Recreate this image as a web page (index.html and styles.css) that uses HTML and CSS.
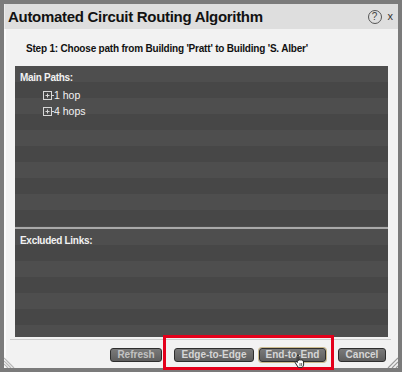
FILE: index.html
```html
<!DOCTYPE html>
<html lang="en">

<head>
    <meta charset="UTF-8">
    <meta name="viewport" content="width=device-width, initial-scale=1.0">
    <title>Automated Circuit Routing Algorithm</title>
    <link rel="stylesheet" href="styles.css">
</head>

<body>
    <div class="dialog">
        <!-- title bar -->
        <div class="titlebar">
            <span class="title">Automated Circuit Routing Algorithm</span>
            <span class="help">?</span>
            <span class="close">x</span>
        </div>

        <div class="content">
            <p class="step">Step 1: Choose path from Building 'Pratt' to Building 'S. Alber'</p>

            <div class="panel">
                <div class="section main">
                    <div class="heading">Main Paths:</div>
                    <ul class="tree">
                        <li>
                            <svg class="expander" width="11" height="9" viewBox="0 0 11 9">
                                <rect x="0.5" y="0.5" width="8" height="8" fill="none" stroke="#d8d8d8" />
                                <path d="M2.5 4.5h4M4.5 2.5v4M8.5 4.5h2.5" stroke="#d8d8d8" />
                            </svg>1 hop
                        </li>
                        <li>
                            <svg class="expander" width="11" height="9" viewBox="0 0 11 9">
                                <rect x="0.5" y="0.5" width="8" height="8" fill="none" stroke="#d8d8d8" />
                                <path d="M2.5 4.5h4M4.5 2.5v4M8.5 4.5h2.5" stroke="#d8d8d8" />
                            </svg>4 hops
                        </li>
                    </ul>
                </div>
                <div class="section excluded">
                    <div class="heading">Excluded Links:</div>
                </div>
            </div>

            <div class="rule"></div>

            <div class="buttons">
                <button class="btn refresh">Refresh</button>
                <button class="btn edge">Edge-to-Edge</button>
                <button class="btn end">End-to-End</button>
                <button class="btn cancel">Cancel</button>
            </div>
        </div>

        <!-- resize grips -->
        <svg class="grip grip-left" width="13" height="13" viewBox="0 0 13 13">
            <path d="M0 3l10 10M0 6l7 7M0 9l4 4" stroke="#b8b8b8" stroke-width="1.2" />
        </svg>
        <svg class="grip grip-right" width="11" height="11" viewBox="0 0 11 11">
            <path d="M11 1L1 11M11 5L5 11M11 9L9 11" stroke="#9a9a9a" stroke-width="1.2" />
        </svg>

        <!-- annotation + pointer -->
        <div class="highlight"></div>
        <svg class="pointer" width="12" height="14" viewBox="0 0 12 14">
            <path d="M3.5 1.2c.7 0 1.2.5 1.2 1.2v4.3l.2-.9c.5-.4 1.2-.3 1.5.2.5-.4 1.2-.3 1.5.3.5-.3 1.2-.1 1.4.5l.4 3.2c0 1.5-.6 2.6-1.4 3.4H4.2L1.3 8.8c-.3-.5-.1-1.100.4-1.3.4-.2.9 0 1.200.4l.4.6V2.4c0-.7.5-1.2 1.2-1.2z" fill="#fff" stroke="#111" stroke-width=".9" />
            <path d="M6 9v3M7.6 9v3" stroke="#111" stroke-width=".6" />
        </svg>
    </div>
</body>

</html>
```

FILE: styles.css
```css
* {
    box-sizing: border-box;
}

body {
    margin: 0;
    background: #7b7b7b;
    font-family: "Liberation Sans", Arial, sans-serif;
}

.dialog {
    position: relative;
    width: 402px;
    height: 372px;
    border: 4px solid #7b7b7b;
    background: #f2f2f2;
    display: flex;
    flex-direction: column;
}

/* title bar */
.titlebar {
    height: 25px;
    background: #dedede;
    display: flex;
    align-items: center;
    padding: 0 3px;
    border-left: 1px solid #ececec;
}

.title {
    flex: 1;
    font-size: 15px;
    font-weight: bold;
    letter-spacing: -0.3px;
    color: #121212;
}

.help {
    width: 14px;
    height: 14px;
    border: 1px solid #555;
    border-radius: 50%;
    font-size: 10px;
    line-height: 12px;
    text-align: center;
    color: #444;
    margin-right: 6px;
}

.close {
    font-size: 11px;
    color: #333;
    margin-right: 2px;
    padding-bottom: 2px;
}

/* body */
.content {
    flex: 1;
    padding: 0 10px 0 9px;
    display: flex;
    flex-direction: column;
    border-left: 2px solid #fbfbfb;
}

.step {
    margin: 14px 0 0 11px;
    height: 12px;
    line-height: 12px;
    font-size: 10px;
    font-weight: bold;
    letter-spacing: -0.2px;
    color: #111;
}

.panel {
    margin-top: 11px;
    height: 271px;
    display: flex;
    flex-direction: column;
    color: #f2f2f2;
}

.section {
    background: repeating-linear-gradient(#4e4e4e 0 16px, #474747 16px 32px);
}

.main {
    height: 163px;
    border-bottom: 2px solid #a9a9a9;
}

.excluded {
    flex: 1;
}

.heading {
    height: 19px;
    padding: 4px 0 0 5px;
    line-height: 15px;
    font-size: 10px;
    font-weight: bold;
    letter-spacing: -0.3px;
}

.tree {
    list-style: none;
    margin: 2px 0 0;
    padding: 0 0 0 28px;
}

.tree li {
    height: 16px;
    display: flex;
    align-items: center;
    font-size: 10.5px;
}

.rule {
    margin: 2px -3px 0 -5px;
    height: 1px;
    background: #cdcdcd;
}

/* button bar */
.buttons {
    margin-top: 8px;
    display: flex;
    justify-content: flex-end;
    gap: 12px;
    padding-right: 2px;
}

.btn {
    height: 14px;
    padding: 0;
    border: 1px solid #2e2e2e;
    border-radius: 3px;
    background: linear-gradient(#7a7a7a, #5e5e5e);
    font-family: "Liberation Sans", Arial, sans-serif;
    font-size: 10px;
    font-weight: bold;
    color: #d6d6d6;
    line-height: 12px;
}

.refresh {
    width: 52px;
    color: #c2c2c2;
}

.edge {
    width: 80px;
}

.end {
    width: 67px;
    margin-left: -7px;
    box-shadow: 0 0 0 1px #cbbb8f;
}

.cancel {
    width: 48px;
}

/* grips */
.grip {
    position: absolute;
    bottom: 0;
}

.grip-left {
    left: 0;
}

.grip-right {
    right: 0;
}

/* red annotation box over the buttons */
.highlight {
    position: absolute;
    left: 159px;
    top: 331px;
    width: 171px;
    height: 35px;
    border: 3px solid #e4001b;
}

.pointer {
    position: absolute;
    left: 290px;
    top: 350px;
}
```
